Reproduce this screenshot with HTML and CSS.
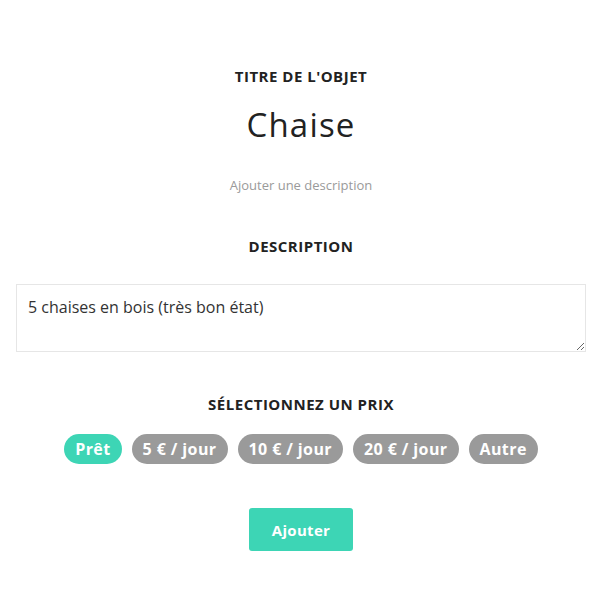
FILE: index.html
```html
<!DOCTYPE html>
<html lang="fr">
<head>
<meta charset="utf-8">
<link rel="stylesheet" href="styles.css">
</head>
<body>
<main class="form">
  <h2 class="label label-first">TITRE DE L'OBJET</h2>
  <h1 class="title">Chaise</h1>
  <p class="hint">Ajouter une description</p>
  <h2 class="label label-desc">DESCRIPTION</h2>
  <textarea class="desc">5 chaises en bois (très bon état)</textarea>
  <h2 class="label label-price">SÉLECTIONNEZ UN PRIX</h2>
  <div class="pills">
    <span class="pill pill-active">Prêt</span>
    <span class="pill">5 € / jour</span>
    <span class="pill">10 € / jour</span>
    <span class="pill">20 € / jour</span>
    <span class="pill">Autre</span>
  </div>
  <div class="actions">
    <button class="submit">Ajouter</button>
  </div>
</main>
</body>
</html>
```
FILE: styles.css
```css
html, body {
  margin: 0;
  padding: 0;
  background: #fff;
}
body {
  font-family: "Open Sans", "Noto Sans", sans-serif;
  color: #222;
}
.form {
  display: flex;
  flex-direction: column;
  align-items: center;
  padding: 0 14px 0 16px;
}
.label {
  margin: 0;
  font-size: 15px;
  font-weight: 700;
  letter-spacing: 0.5px;
  line-height: 20px;
  color: #222;
}
.label-first { margin-top: 66px; }
.title {
  margin: 20px 0 0;
  font-size: 33px;
  font-weight: 400;
  letter-spacing: 1.2px;
  line-height: 38px;
  color: #222;
}
.hint {
  margin: 32px 0 0;
  font-size: 13px;
  line-height: 18px;
  color: #9a9a9a;
}
.label-desc { margin-top: 42px; }
.desc {
  box-sizing: border-box;
  margin-top: 28px;
  width: 100%;
  height: 68px;
  padding: 12px 11px;
  border: 1px solid #e6e6e6;
  border-radius: 0;
  font-family: inherit;
  font-size: 16px;
  line-height: 20px;
  color: #333;
  resize: vertical;
}
.label-price { margin-top: 42px; }
.pills {
  display: flex;
  gap: 10px;
  margin-top: 20px;
}
.pill {
  display: inline-flex;
  align-items: center;
  height: 30px;
  padding: 0 11px;
  border-radius: 15px;
  background: #9a9a9a;
  color: #fff;
  font-size: 16px;
  font-weight: 700;
  letter-spacing: 0.4px;
}
.pill-active { background: #3dd5b5; }
.actions {
  margin-top: 44px;
}
.submit {
  width: 104px;
  height: 43px;
  border: 0;
  border-radius: 3px;
  background: #3dd5b5;
  color: #fff;
  font-family: inherit;
  font-size: 15px;
  font-weight: 700;
  letter-spacing: 0.3px;
}
```
